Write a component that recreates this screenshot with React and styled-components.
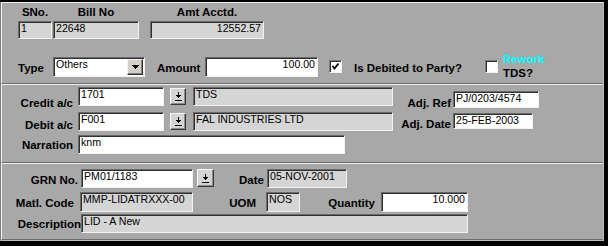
import React from 'react';
import styled, { createGlobalStyle } from 'styled-components';

const GlobalStyle = createGlobalStyle`
  html, body { margin: 0; padding: 0; background: #000; }
  body { font-family: "Liberation Sans", Arial, sans-serif; color: #000; }
  * { box-sizing: border-box; }
`;

const Screen = styled.div`
  width: 608px;
  height: 246px;
  background: #000;
  padding-top: 2px;
  overflow: hidden;
`;

const Frame = styled.div`
  width: 604px;
  height: 239px;
  background: #a8a8a8;
  border-left: 1px solid #7c7c7c;
  border-right: 1px solid #bdbdbd;
  border-bottom: 1px solid #bdbdbd;
  display: flex;
  flex-direction: column;
`;

const Panel = styled.section`
  flex: none;
  height: ${p => p.$h}px;
  border-top: 1px solid #efefef;
  border-left: 1px solid #efefef;
  border-bottom: 1px solid #6c6c6c;
  padding-top: ${p => p.$pt}px;
  display: flex;
  flex-direction: column;
`;

const Row = styled.div`
  flex: none;
  display: flex;
  align-items: flex-start;
  height: ${p => p.$h}px;
  margin-top: ${p => p.$mt || 0}px;
  padding-left: ${p => p.$pl || 0}px;
`;

const Column = styled.div`
  flex: none;
  display: flex;
  flex-direction: column;
  align-items: center;
  gap: 2px;
  width: ${p => p.$w}px;
  margin-left: ${p => p.$l || 0}px;
`;

const Label = styled.div`
  flex: none;
  width: ${p => (p.$w ? `${p.$w}px` : 'auto')};
  margin-top: ${p => p.$t || 0}px;
  margin-left: ${p => p.$l || 0}px;
  font-weight: 700;
  font-size: 11.5px;
  line-height: 13px;
  text-align: ${p => p.$align || 'left'};
  white-space: nowrap;
  color: #000;
`;

const Field = styled.div`
  flex: none;
  width: ${p => p.$w}px;
  height: ${p => p.$h || 19}px;
  margin-top: ${p => p.$t || 0}px;
  margin-left: ${p => p.$l || 0}px;
  background: ${p => (p.$ro ? '#d5d5d5' : '#ffffff')};
  border-top: 1px solid #6a6a6a;
  border-left: 1px solid #6a6a6a;
  border-bottom: 1px solid #f2f2f2;
  border-right: 1px solid #f2f2f2;
  box-shadow: inset 1px 1px 0 #303030;
  padding: 0 2px 0 2px;
  font-size: 10.6px;
  line-height: 13px;
  text-align: ${p => (p.$right ? 'right' : 'left')};
  white-space: nowrap;
  overflow: hidden;
  color: #000;
`;

const SelectBox = styled(Field)`
  display: flex;
  justify-content: space-between;
  padding-right: 1px;
`;

const DropButton = styled.div`
  flex: none;
  width: 16px;
  height: 16px;
  margin-top: 1px;
  background: #d4d0c8;
  border-top: 1px solid #f4f4f4;
  border-left: 1px solid #f4f4f4;
  border-bottom: 1px solid #303030;
  border-right: 1px solid #303030;
  box-shadow: inset -1px -1px 0 #808080;
  display: flex;
  align-items: center;
  justify-content: center;
`;

const LookupButton = styled.div`
  flex: none;
  width: ${p => p.$w || 16}px;
  height: ${p => p.$h || 17}px;
  margin-top: ${p => p.$t || 0}px;
  margin-left: ${p => p.$l || 0}px;
  background: #d4d4d4;
  border-top: 1px solid #f6f6f6;
  border-left: 1px solid #f6f6f6;
  border-bottom: 1px solid #3a3a3a;
  border-right: 1px solid #3a3a3a;
  box-shadow: inset -1px -1px 0 #8a8a8a;
  display: flex;
  align-items: center;
  justify-content: center;
`;

const Check = styled.div`
  flex: none;
  width: 13px;
  height: 13px;
  margin-top: ${p => p.$t || 0}px;
  margin-left: ${p => p.$l || 0}px;
  background: #fff;
  border-top: 1px solid #7a7a7a;
  border-left: 1px solid #7a7a7a;
  border-bottom: 1px solid #f2f2f2;
  border-right: 1px solid #f2f2f2;
  box-shadow: inset 1px 1px 0 #303030;
  display: flex;
  align-items: center;
  justify-content: center;
`;

const Stack = styled.div`
  flex: none;
  margin-left: ${p => p.$l || 0}px;
  display: flex;
  flex-direction: column;
  font-weight: 700;
  font-size: 11.5px;
  line-height: 14px;
`;

const Cyan = styled.span`
  color: #00ffff;
`;

const DownTriangle = () => (
  <svg width="7" height="4" viewBox="0 0 7 4" shapeRendering="crispEdges">
    <rect x="0" y="0" width="7" height="1" fill="#000" />
    <rect x="1" y="1" width="5" height="1" fill="#000" />
    <rect x="2" y="2" width="3" height="1" fill="#000" />
    <rect x="3" y="3" width="1" height="1" fill="#000" />
  </svg>
);

const ArrowBarIcon = () => (
  <svg width="7" height="9" viewBox="0 0 7 9" shapeRendering="crispEdges">
    <rect x="3" y="0" width="1" height="3" fill="#000" />
    <rect x="1" y="3" width="5" height="1" fill="#000" />
    <rect x="2" y="4" width="3" height="1" fill="#000" />
    <rect x="3" y="5" width="1" height="1" fill="#000" />
    <rect x="0" y="8" width="7" height="1" fill="#000" />
  </svg>
);

const CheckMark = () => (
  <svg width="9" height="9" viewBox="0 0 9 9">
    <polyline points="1.5,4 3.5,6.5 7.5,1.5" fill="none" stroke="#000" strokeWidth="1.8" />
  </svg>
);

export default function App() {
  return (
    <>
      <GlobalStyle />
      <Screen>
        <Frame>
          <Panel $h={82} $pt={3}>
            <Row $h={33} $pl={16}>
              <Column $w={34}>
                <Label>SNo.</Label>
                <Field $w={34} $h={18} $ro>1</Field>
              </Column>
              <Column $w={86} $l={1}>
                <Label>Bill No</Label>
                <Field $w={86} $h={18} $ro>22648</Field>
              </Column>
              <Column $w={114} $l={11}>
                <Label>Amt Acctd.</Label>
                <Field $w={114} $h={18} $ro $right>12552.57</Field>
              </Column>
            </Row>
            <Row $h={30} $mt={13} $pl={16}>
              <Label $w={35} $t={10}>Type</Label>
              <SelectBox $w={92} $h={20} $t={5}>
                <span>Others</span>
                <DropButton><DownTriangle /></DropButton>
              </SelectBox>
              <Label $w={48} $l={12} $t={10}>Amount</Label>
              <Field $w={113} $h={20} $t={5} $right>100.00</Field>
              <Check $l={11} $t={8}><CheckMark /></Check>
              <Label $w={131} $l={12} $t={10}>Is Debited to Party?</Label>
              <Check $t={8} />
              <Stack $l={5}>
                <Cyan>Rework</Cyan>
                <span>TDS?</span>
              </Stack>
            </Row>
          </Panel>

          <Panel $h={79} $pt={2}>
            <Row $h={25}>
              <Label $w={71} $t={10} $align="right">Credit a/c</Label>
              <Field $w={86} $l={5}>1701</Field>
              <LookupButton $l={6} $t={1}><ArrowBarIcon /></LookupButton>
              <Field $w={200} $l={7} $ro>TDS</Field>
              <Label $w={58} $t={10} $align="right">Adj. Ref</Label>
              <Field $w={86} $h={17} $l={2} $t={4}>PJ/0203/4574</Field>
            </Row>
            <Row $h={23}>
              <Label $w={71} $t={7} $align="right">Debit a/c</Label>
              <Field $w={86} $l={5}>F001</Field>
              <LookupButton $l={6} $t={1}><ArrowBarIcon /></LookupButton>
              <Field $w={200} $l={7} $ro>FAL INDUSTRIES LTD</Field>
              <Label $w={58} $t={6} $align="right">Adj. Date</Label>
              <Field $w={80} $h={16} $l={2} $t={1}>25-FEB-2003</Field>
            </Row>
            <Row $h={19}>
              <Label $w={71} $t={4} $align="right">Narration</Label>
              <Field $w={267} $l={5}>knm</Field>
            </Row>
          </Panel>

          <Panel $h={77} $pt={5}>
            <Row $h={23}>
              <Label $w={76} $t={5} $align="right">GRN No.</Label>
              <Field $w={112} $l={3}>PM01/1183</Field>
              <LookupButton $w={17} $h={18} $l={4}><ArrowBarIcon /></LookupButton>
              <Label $w={50} $t={5} $align="right">Date</Label>
              <Field $w={80} $l={3} $ro>05-NOV-2001</Field>
            </Row>
            <Row $h={22}>
              <Label $w={72} $t={5} $align="right">Matl. Code</Label>
              <Field $w={113} $h={20} $l={6} $ro>MMP-LIDATRXXX-00</Field>
              <Label $w={63} $t={5} $align="right">UOM</Label>
              <Field $w={34} $h={20} $l={10} $ro>NOS</Field>
              <Label $w={75} $t={5} $align="right">Quantity</Label>
              <Field $w={87} $h={20} $l={6} $right>10.000</Field>
            </Row>
            <Row $h={19}>
              <Label $w={79} $t={4} $align="right">Description</Label>
              <Field $w={387} $ro>LID - A New</Field>
            </Row>
          </Panel>
        </Frame>
      </Screen>
    </>
  );
}
